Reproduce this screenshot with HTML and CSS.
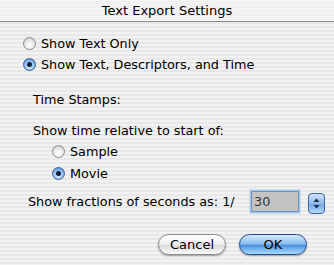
FILE: index.html
```html
<html>
  <head>
    <meta charset="UTF-8">
    <link rel="stylesheet" href="styles.css">
  </head>
  <body>
    <div class="window">
      <div class="titlebar">Text Export Settings</div>
      <div class="content">
        <div class="row radio-row first">
          <span class="radio"></span>Show Text Only
        </div>
        <div class="row radio-row">
          <span class="radio on"></span>Show Text, Descriptors, and Time
        </div>

        <div class="row label stamps">Time Stamps:</div>
        <div class="row label relative">Show time relative to start of:</div>
        <div class="row radio-row sub">
          <span class="radio"></span>Sample
        </div>
        <div class="row radio-row sub movie">
          <span class="radio on"></span>Movie
        </div>

        <div class="fractions">
          <span class="frac-label">Show fractions of seconds as: 1/</span>
          <span class="field"><span class="sel">30</span></span>
          <span class="stepper">
            <svg width="7" height="11" viewBox="0 0 7 11">
              <path d="M3.5 0.5 L6.5 4 L0.5 4 Z" fill="#1a2a4a"/>
              <path d="M3.5 10.5 L6.5 7 L0.5 7 Z" fill="#1a2a4a"/>
            </svg>
          </span>
        </div>

        <div class="buttons">
          <span class="btn cancel">Cancel</span>
          <span class="btn ok">OK</span>
        </div>
      </div>
    </div>
  </body>
</html>
```

FILE: styles.css
```css
body {
  margin: 0;
  font-family: "DejaVu Sans", "Liberation Sans", sans-serif;
  font-size: 12.8px;
  color: #000;
}

.window {
  width: 334px;
  height: 265px;
  overflow: hidden;
  background: repeating-linear-gradient(to bottom, #f2f2f2 0, #f2f2f2 2px, #e8e8e8 2px, #e8e8e8 4px);
}

.titlebar {
  height: 21px;
  line-height: 22px;
  text-align: center;
  font-size: 13px;
  border-bottom: 1px solid #8a8a8a;
  background: repeating-linear-gradient(to bottom, #f6f6f6 0, #f6f6f6 1px, #ececec 1px, #ececec 2px);
}

.content {
  padding-top: 11px;
}

.row {
  height: 21px;
  line-height: 21px;
  display: flex;
  align-items: center;
}

.radio-row {
  padding-left: 23px;
}

.radio {
  width: 11px;
  height: 11px;
  border-radius: 50%;
  border: 1px solid #8c8c8c;
  background: radial-gradient(circle at 50% 70%, #ffffff 0, #f0f0f0 40%, #c4c4c4 100%);
  margin-right: 5px;
  flex: none;
  position: relative;
}

.radio.on {
  border-color: #3b5f9a;
  background: radial-gradient(circle at 50% 65%, #e4f2ff 0, #9cc8f4 45%, #3c78c8 100%);
}

.radio.on::after {
  content: "";
  position: absolute;
  left: 3px;
  top: 3px;
  width: 5px;
  height: 5px;
  border-radius: 50%;
  background: #12203a;
}

.label {
  padding-left: 33px;
}

.stamps {
  margin-top: 14px;
}

.relative {
  margin-top: 10px;
}

.sub {
  padding-left: 52px;
}

.movie {
  margin-top: 1px;
}

.fractions {
  display: flex;
  align-items: center;
  height: 24px;
  margin-top: 5px;
  padding-left: 28px;
}

.frac-label {
  width: 223px;
}

.field {
  width: 44px;
  height: 19px;
  border: 1px solid #6f8fc0;
  box-shadow: 0 0 0 1px #a9c6ec, 0 0 0 2px #c8dcf4;
  background: #c3c3c3;
  color: #333;
  display: flex;
  align-items: center;
  padding-left: 2px;
}

.stepper {
  width: 15px;
  height: 19px;
  margin-left: 9px;
  margin-top: 4px;
  border: 1px solid #3f63a0;
  border-radius: 4px;
  background: linear-gradient(to bottom, #cfe3fa 0, #8fbaec 50%, #6fa3e4 51%, #b8d8fb 100%);
  display: flex;
  align-items: center;
  justify-content: center;
}

.buttons {
  display: flex;
  gap: 13px;
  padding-left: 158px;
  margin-top: 21px;
}

.btn {
  width: 66px;
  height: 19px;
  line-height: 19px;
  border-radius: 11px;
  text-align: center;
  font-size: 13px;
  box-shadow: 0 1px 2px rgba(0, 0, 0, 0.35);
}

.cancel {
  border: 1px solid #8a8a8a;
  background: linear-gradient(to bottom, #ffffff 0, #f0f0f0 45%, #dcdcdc 55%, #f8f8f8 100%);
}

.ok {
  border: 1px solid #24498a;
  background: linear-gradient(to bottom, #d4e8fd 0, #8fc0f2 45%, #4d92e2 55%, #a9dcff 100%);
}
```
